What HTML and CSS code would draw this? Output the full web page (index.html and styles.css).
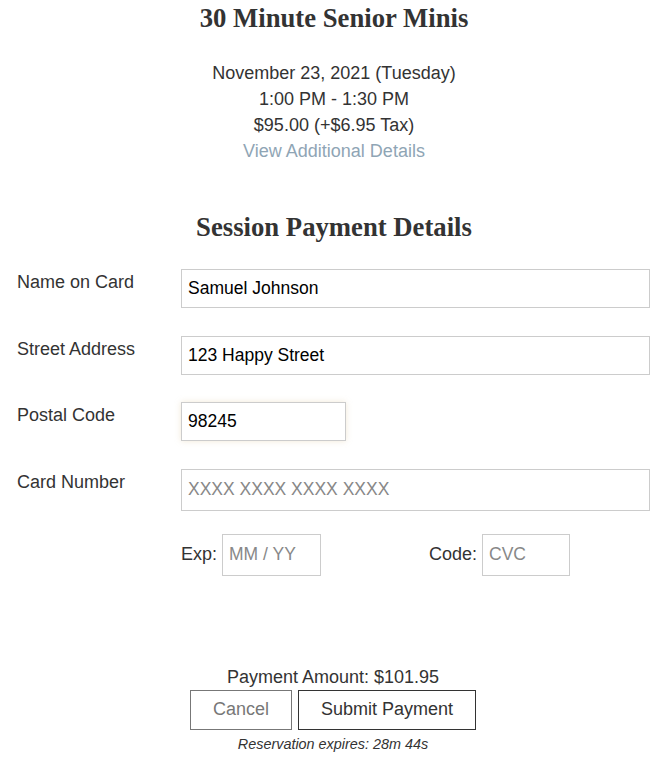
FILE: index.html
```html
<!DOCTYPE html>
<html lang="en">
<head>
    <meta charset="UTF-8">
    <meta name="viewport" content="width=device-width, initial-scale=1.0">
    <title>Session Payment</title>
    <link rel="stylesheet" href="styles.css">
</head>
<body>
    <h1>30 Minute Senior Minis</h1>
    <div class="session-info">
        <p>November 23, 2021 (Tuesday)</p>
        <p>1:00 PM - 1:30 PM</p>
        <p>$95.00 (+$6.95 Tax)</p>
        <p><a href="#" class="details-link">View Additional Details</a></p>
    </div>

    <h2>Session Payment Details</h2>
    <form class="payment-form">
        <div class="form-row">
            <label for="name">Name on Card</label>
            <input type="text" id="name" value="Samuel Johnson">
        </div>
        <div class="form-row">
            <label for="street">Street Address</label>
            <input type="text" id="street" value="123 Happy Street">
        </div>
        <div class="form-row">
            <label for="postal">Postal Code</label>
            <input type="text" id="postal" class="short focused" value="98245">
        </div>
        <div class="form-row card-row">
            <label for="card">Card Number</label>
            <input type="text" id="card" class="tall" placeholder="XXXX XXXX XXXX XXXX">
        </div>
        <div class="card-extra">
            <div class="exp-group">
                <span>Exp:</span>
                <input type="text" class="tall exp" placeholder="MM / YY">
            </div>
            <div class="code-group">
                <span>Code:</span>
                <input type="text" class="tall cvc" placeholder="CVC">
            </div>
        </div>

        <div class="summary">
            <p class="amount">Payment Amount: $101.95</p>
            <div class="buttons">
                <button type="button" class="btn cancel">Cancel</button>
                <button type="button" class="btn submit">Submit Payment</button>
            </div>
            <p class="expires">Reservation expires: 28m 44s</p>
        </div>
    </form>
</body>
</html>
```

FILE: styles.css
```css
body {
    margin: 0;
    padding: 0;
    font-family: "Liberation Sans", Arial, sans-serif;
    font-size: 18px;
    color: #333;
    background: #fff;
}
h1, h2 {
    font-family: "Liberation Serif", "Times New Roman", serif;
    font-weight: bold;
    text-align: center;
    font-size: 26.7px;
    line-height: 30px;
    margin: 0;
}
h1 {
    padding-top: 3px;
}
h2 {
    margin-top: 48px;
}
.session-info {
    text-align: center;
    margin-top: 27px;
}
.session-info p {
    margin: 0;
    line-height: 26px;
}
.details-link {
    color: #8fa5b5;
    text-decoration: none;
}
.payment-form {
    padding: 0 18px 0 17px;
    margin-top: 27px;
}
.form-row {
    display: flex;
    align-items: flex-start;
    margin-bottom: 27.5px;
}
.form-row label {
    width: 164px;
    flex-shrink: 0;
    line-height: 26px;
}
.form-row.card-row {
    margin-bottom: 23px;
}
input {
    font-family: "Liberation Sans", Arial, sans-serif;
    font-size: 17.5px;
    color: #000;
    height: 39px;
    box-sizing: border-box;
    padding: 0 6px;
    border: 1px solid #ccc;
    border-radius: 0;
    outline: none;
    flex: 1;
    min-width: 0;
}
input::placeholder {
    color: #888;
}
input.short {
    flex: none;
    width: 165px;
}
input.focused {
    box-shadow: 0 0 6px rgba(215, 190, 140, 0.35);
}
input.tall {
    height: 42px;
}
.card-extra {
    display: flex;
    padding-left: 164px;
}
.exp-group, .code-group {
    display: flex;
    align-items: center;
}
.exp-group {
    width: 248px;
}
.exp-group span {
    margin-right: 5px;
}
.code-group span {
    margin-right: 5px;
}
input.exp {
    flex: none;
    width: 99px;
}
input.cvc {
    flex: none;
    width: 88px;
}
.summary {
    text-align: center;
    margin-top: 88px;
    padding-right: 1px;
}
.amount {
    margin: 0;
    line-height: 26px;
}
.buttons {
    display: flex;
    justify-content: center;
    gap: 6px;
}
.btn {
    font-family: "Liberation Sans", Arial, sans-serif;
    font-size: 18px;
    height: 40px;
    padding: 0;
    white-space: nowrap;
    background: #fff;
    cursor: pointer;
}
.btn.cancel {
    width: 102px;
    color: #777;
    border: 1px solid #777;
}
.btn.submit {
    width: 178px;
    color: #333;
    border: 1px solid #333;
}
.expires {
    margin: 6px 0 0;
    font-size: 14.4px;
    font-style: italic;
}
```
